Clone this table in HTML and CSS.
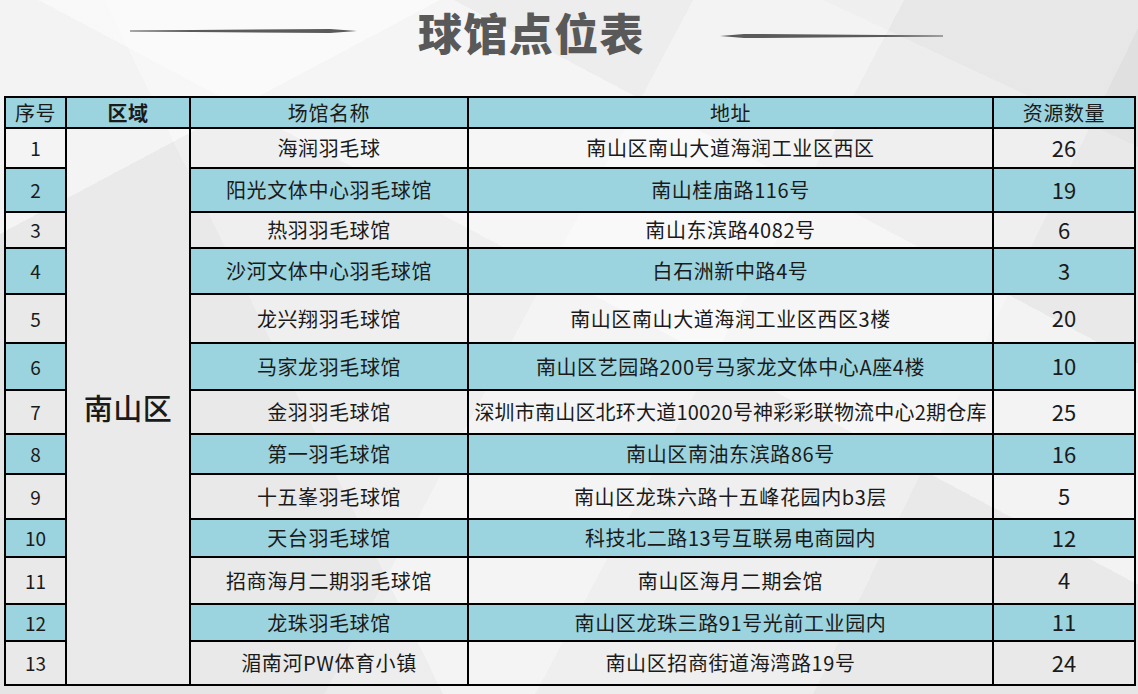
FILE: index.html
```html
<!DOCTYPE html>
<html lang="zh-CN">
<head>
<meta charset="utf-8">
<title>球馆点位表</title>
<link rel="stylesheet" href="styles.css">
</head>
<body>
<div class="page">
  <header class="title-bar">
    <svg class="line line-left" width="227" height="6" viewBox="0 0 227 6"><polygon points="0,2.6 200,0.9 227,3 200,5.1 0,3.4" fill="#5a5a5a"/></svg>
    <h1 class="title">球馆点位表</h1>
    <svg class="line line-right" width="223" height="6" viewBox="0 0 223 6"><polygon points="0,3 24,0.9 223,2.6 223,3.4 24,5.1" fill="#5a5a5a"/></svg>
  </header>
  <table class="venues">
    <colgroup>
      <col class="c-no"><col class="c-area"><col class="c-name"><col class="c-addr"><col class="c-count">
    </colgroup>
    <thead>
      <tr><th>序号</th><th class="bold">区域</th><th>场馆名称</th><th>地址</th><th>资源数量</th></tr>
    </thead>
    <tbody>
      <tr><td class="no">1</td><td class="area" rowspan="13">南山区</td><td>海润羽毛球</td><td>南山区南山大道海润工业区西区</td><td class="count">26</td></tr>
      <tr><td class="no">2</td><td>阳光文体中心羽毛球馆</td><td>南山桂庙路116号</td><td class="count">19</td></tr>
      <tr><td class="no">3</td><td>热羽羽毛球馆</td><td>南山东滨路4082号</td><td class="count">6</td></tr>
      <tr><td class="no">4</td><td>沙河文体中心羽毛球馆</td><td>白石洲新中路4号</td><td class="count">3</td></tr>
      <tr><td class="no">5</td><td>龙兴翔羽毛球馆</td><td>南山区南山大道海润工业区西区3楼</td><td class="count">20</td></tr>
      <tr><td class="no">6</td><td>马家龙羽毛球馆</td><td>南山区艺园路200号马家龙文体中心A座4楼</td><td class="count">10</td></tr>
      <tr><td class="no">7</td><td>金羽羽毛球馆</td><td class="tight">深圳市南山区北环大道10020号神彩彩联物流中心2期仓库</td><td class="count">25</td></tr>
      <tr><td class="no">8</td><td>第一羽毛球馆</td><td>南山区南油东滨路86号</td><td class="count">16</td></tr>
      <tr><td class="no">9</td><td>十五峯羽毛球馆</td><td>南山区龙珠六路十五峰花园内b3层</td><td class="count">5</td></tr>
      <tr><td class="no">10</td><td>天台羽毛球馆</td><td>科技北二路13号互联易电商园内</td><td class="count">12</td></tr>
      <tr><td class="no">11</td><td>招商海月二期羽毛球馆</td><td>南山区海月二期会馆</td><td class="count">4</td></tr>
      <tr><td class="no">12</td><td>龙珠羽毛球馆</td><td>南山区龙珠三路91号光前工业园内</td><td class="count">11</td></tr>
      <tr><td class="no">13</td><td>湄南河PW体育小镇</td><td>南山区招商街道海湾路19号</td><td class="count">24</td></tr>
    </tbody>
  </table>
</div>
</body>
</html>
```
FILE: styles.css
```css
html, body {
  margin: 0;
  padding: 0;
  width: 1138px;
  height: 694px;
  overflow: hidden;
}

body {
  font-family: "Noto Sans CJK SC", "Noto Sans", sans-serif;
  color: #1a1a1a;
  background-color: #ededed;
  background-image:
    linear-gradient(152deg, rgba(255,255,255,0.55) 0 18%, transparent 18%),
    linear-gradient(28deg, transparent 0 55%, rgba(255,255,255,0.45) 55% 72%, transparent 72%),
    linear-gradient(64deg, rgba(0,0,0,0.035) 0 30%, transparent 30%),
    linear-gradient(296deg, rgba(0,0,0,0.03) 0 22%, transparent 22%),
    linear-gradient(118deg, transparent 0 46%, rgba(255,255,255,0.35) 46% 60%, transparent 60%),
    linear-gradient(205deg, rgba(0,0,0,0.025) 0 12%, transparent 12%);
}

.page {
  display: flex;
  flex-direction: column;
}

.title-bar {
  height: 64px;
  display: flex;
  align-items: center;
  padding-left: 130px;
}

.line-left {
  margin-top: -2px;
}

.line-right {
  margin-top: 8px;
}

.title {
  margin: 0 75px 0 61px;
  font-size: 44px;
  font-weight: 900;
  letter-spacing: 1.4px;
  line-height: 64px;
  color: #595959;
  white-space: nowrap;
}

.venues {
  margin: 32px 0 0 4px;
  width: 1130px;
  table-layout: fixed;
  border-collapse: collapse;
  border: 2px solid #000;
}

.c-no { width: 61px; }
.c-area { width: 124px; }
.c-name { width: 278px; }
.c-addr { width: 525px; }
.c-count { width: 142px; }

.venues th,
.venues td {
  border: 2px solid #000;
  padding: 0;
  text-align: center;
  vertical-align: middle;
  white-space: nowrap;
  overflow: hidden;
  font-size: 20px;
  font-weight: 400;
  letter-spacing: 0.6px;
  line-height: 24px;
}

.venues thead tr {
  height: 31px;
  background: #9bd3de;
}

.venues th.bold {
  font-weight: 700;
}

.venues tbody tr {
  background: rgba(255,255,255,0.15);
}

.venues tbody tr:nth-child(even) {
  background: #9bd3de;
}

.venues td.area {
  background: rgba(255,255,255,0.05);
  font-size: 29px;
  font-weight: 500;
  letter-spacing: 0.5px;
}

.venues td.no {
  font-size: 19px;
  letter-spacing: 0;
}

.venues td.count {
  font-size: 22px;
  letter-spacing: 0;
  padding-bottom: 3px;
}

.venues td.tight {
  letter-spacing: 0.2px;
}

.venues tbody tr:nth-child(1) { height: 40px; }
.venues tbody tr:nth-child(2) { height: 44px; }
.venues tbody tr:nth-child(3) { height: 36px; }
.venues tbody tr:nth-child(4) { height: 46px; }
.venues tbody tr:nth-child(5) { height: 49px; }
.venues tbody tr:nth-child(6) { height: 47px; }
.venues tbody tr:nth-child(7) { height: 44px; }
.venues tbody tr:nth-child(8) { height: 40px; }
.venues tbody tr:nth-child(9) { height: 45px; }
.venues tbody tr:nth-child(10) { height: 38px; }
.venues tbody tr:nth-child(11) { height: 47px; }
.venues tbody tr:nth-child(12) { height: 37px; }
.venues tbody tr:nth-child(13) { height: 44px; }
```
